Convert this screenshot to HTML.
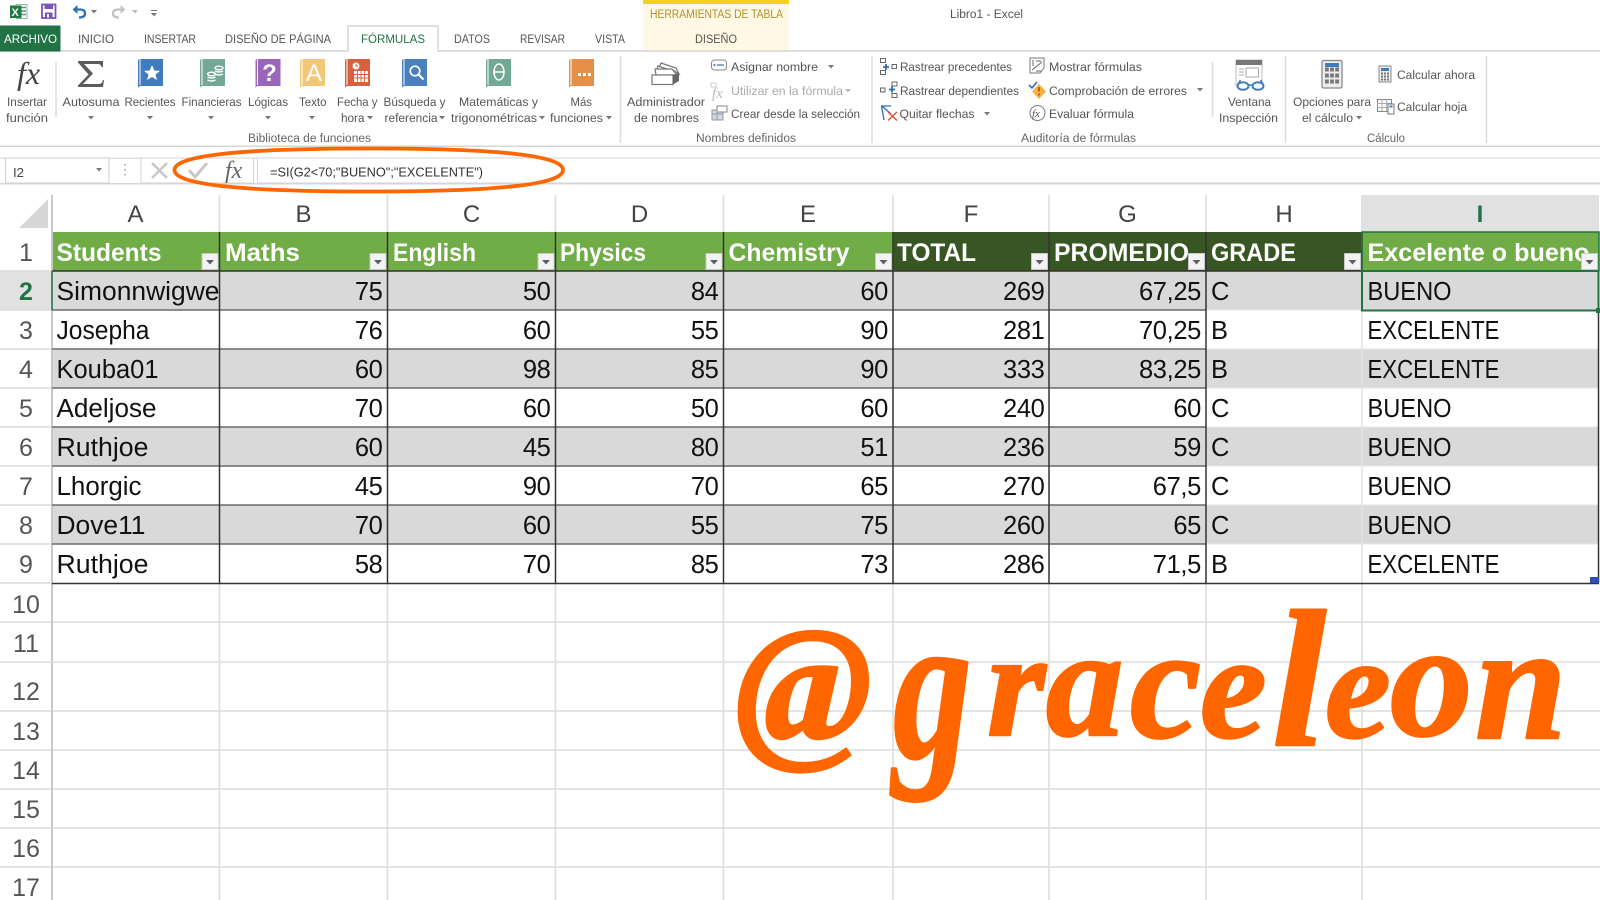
<!DOCTYPE html>
<html><head><meta charset="utf-8"><title>Libro1 - Excel</title>
<style>
html,body{margin:0;padding:0;background:#fff;width:1600px;height:900px;overflow:hidden}
svg{display:block;font-family:"Liberation Sans",sans-serif}
.r text{font-size:12.3px;fill:#555}
.d text{font-size:25.5px;fill:#111}
.n text{font-size:25.5px;fill:#111;text-anchor:end;letter-spacing:-.35px}
.h text{font-size:25px;fill:#fff;font-weight:bold}
.rh text{font-size:25px;fill:#555;text-anchor:middle}
.ch text{font-size:24px;fill:#444;text-anchor:middle}
</style></head><body>
<svg width="1600" height="900" viewBox="0 0 1600 900" xmlns="http://www.w3.org/2000/svg">
<defs>
<path id="ar" d="M0 0h6l-3 3.5z" fill="#777"/>
<g id="fb"><rect x=".5" y=".5" width="16" height="16" fill="#f3f3f5" stroke="#c8c8c8"/><path d="M4.5 7h8l-4 4.5z" fill="#606060"/></g>
<path id="bk" d="M2 0h23v27H3.5Q0 27 0 29.5V2Q0 0 2 0z"/>
</defs>
<rect width="1600" height="900" fill="#fff"/>

<!-- column header highlight -->
<rect x="1362" y="195" width="237" height="37" fill="#e1e1e1"/>
<rect x="0" y="271" width="52" height="39" fill="#e1e1e1"/>

<!-- data backgrounds -->
<rect x="52" y="232" width="1154" height="39" fill="#70ad47"/>
<rect x="893" y="232" width="469" height="39" fill="#375623"/>
<rect x="1362" y="232" width="237" height="39" fill="#70ad47"/>
<g fill="#d9d9d9">
<rect x="52" y="271" width="1547" height="39"/>
<rect x="52" y="349" width="1547" height="39"/>
<rect x="52" y="427" width="1547" height="39"/>
<rect x="52" y="505" width="1547" height="39"/>
</g>

<!-- gridlines -->
<g stroke="#dcdcdc" stroke-width="1.5" fill="none">
<path d="M0 271H52M0 310H52M0 349H52M0 388H52M0 427H52M0 466H52M0 505H52M0 544H52M0 583H52"/>
<path d="M52 622H1600M52 662H1600M52 711H1600M52 750H1600M52 789H1600M52 828H1600M52 867H1600M0 622H52M0 662H52M0 711H52M0 750H52M0 789H52M0 828H52M0 867H52"/>
<path d="M219.5 195V232M387.5 195V232M555.5 195V232M723.5 195V232M893 195V232M1049 195V232M1206 195V232M1362 195V232"/>
<path d="M219.5 583V900M387.5 583V900M555.5 583V900M723.5 583V900M893 583V900M1049 583V900M1206 583V900M1362 583V900"/>
</g>
<path d="M52 195V900" stroke="#c8c8c8" stroke-width="2"/>
<path d="M52 662H1600" stroke="#e6e6e6" stroke-width="2"/>
<path d="M1206 310H1599M1206 349H1599M1206 388H1599M1206 427H1599M1206 466H1599M1206 505H1599M1206 544H1599" stroke="#e6e6e6" stroke-width="1"/>
<path d="M1362 310V583" stroke="#e2e2e2" stroke-width="1.5"/>

<!-- table borders -->
<g stroke="#6a6a6a" stroke-width="1.5" fill="none">
<path d="M52 310H1206M52 349H1206M52 388H1206M52 427H1206M52 466H1206M52 505H1206M52 544H1206"/>
</g>
<g stroke="#333" stroke-width="1.5" fill="none">
<path d="M52 271H1362M52 583.5H1599"/>
<path d="M219.5 232V583M387.5 232V583M555.5 232V583M723.5 232V583M893 232V583M1049 232V583M1206 232V583M1598.5 271V583"/>
<path d="M1362 232V271"/>
</g>
<path d="M52 271V310" stroke="#217346" stroke-width="1.5"/>
<rect x="1362" y="232" width="237" height="39" fill="none" stroke="#217346" stroke-width="1.5"/>
<rect x="1362" y="271" width="236.5" height="39.5" fill="none" stroke="#217346" stroke-width="2"/>
<rect x="1596" y="308" width="4" height="5" fill="#217346"/>
<rect x="1590" y="577" width="9" height="6" fill="#2f4fb0"/>

<!-- corner triangle -->
<path d="M48 199V228H19z" fill="#d6d6d6"/>

<!-- column letters -->
<g class="ch">
<text x="135.5" y="222">A</text><text x="303.5" y="222">B</text><text x="471.5" y="222">C</text><text x="639.5" y="222">D</text><text x="808" y="222">E</text><text x="971" y="222">F</text><text x="1127.5" y="222">G</text><text x="1284" y="222">H</text>
<text x="1480" y="222" style="fill:#217346;font-weight:bold">I</text>
</g>

<!-- row numbers -->
<g class="rh">
<text x="26" y="261">1</text><text x="26" y="300" style="fill:#217346;font-weight:bold">2</text><text x="26" y="339">3</text><text x="26" y="378">4</text><text x="26" y="417">5</text><text x="26" y="456">6</text><text x="26" y="495">7</text><text x="26" y="534">8</text><text x="26" y="573">9</text><text x="26" y="613">10</text><text x="26" y="652">11</text><text x="26" y="700">12</text><text x="26" y="740">13</text><text x="26" y="779">14</text><text x="26" y="818">15</text><text x="26" y="857">16</text><text x="26" y="896">17</text>
</g>

<!-- header labels -->
<g class="h">
<text x="56.5" y="261" textLength="105" lengthAdjust="spacingAndGlyphs">Students</text>
<text x="225" y="261" textLength="75" lengthAdjust="spacingAndGlyphs">Maths</text>
<text x="393" y="261" textLength="83" lengthAdjust="spacingAndGlyphs">English</text>
<text x="560" y="261" textLength="86" lengthAdjust="spacingAndGlyphs">Physics</text>
<text x="728.5" y="261" textLength="121" lengthAdjust="spacingAndGlyphs">Chemistry</text>
<text x="897" y="261" textLength="79" lengthAdjust="spacingAndGlyphs">TOTAL</text>
<text x="1054" y="261" textLength="135" lengthAdjust="spacingAndGlyphs">PROMEDIO</text>
<text x="1211" y="261" textLength="85" lengthAdjust="spacingAndGlyphs">GRADE</text>
<text x="1367.5" y="261" textLength="222" lengthAdjust="spacingAndGlyphs">Excelente o bueno</text>
</g>
<use href="#fb" x="201.5" y="253"/><use href="#fb" x="369.5" y="253"/><use href="#fb" x="537.5" y="253"/><use href="#fb" x="705.5" y="253"/><use href="#fb" x="875" y="253"/><use href="#fb" x="1031" y="253"/><use href="#fb" x="1188" y="253"/><use href="#fb" x="1344" y="253"/><use href="#fb" x="1581" y="253"/>

<!-- names -->
<g class="d">
<text x="56.5" y="300" textLength="163" lengthAdjust="spacingAndGlyphs">Simonnwigwe</text>
<text x="56.5" y="339" textLength="93" lengthAdjust="spacingAndGlyphs">Josepha</text>
<text x="56.5" y="378" textLength="102" lengthAdjust="spacingAndGlyphs">Kouba01</text>
<text x="56.5" y="417" textLength="100" lengthAdjust="spacingAndGlyphs">Adeljose</text>
<text x="56.5" y="456" textLength="92" lengthAdjust="spacingAndGlyphs">Ruthjoe</text>
<text x="56.5" y="495" textLength="85" lengthAdjust="spacingAndGlyphs">Lhorgic</text>
<text x="56.5" y="534" textLength="89" lengthAdjust="spacingAndGlyphs">Dove11</text>
<text x="56.5" y="573" textLength="92" lengthAdjust="spacingAndGlyphs">Ruthjoe</text>
<text x="1211" y="300">C</text><text x="1211" y="339">B</text><text x="1211" y="378">B</text><text x="1211" y="417">C</text><text x="1211" y="456">C</text><text x="1211" y="495">C</text><text x="1211" y="534">C</text><text x="1211" y="573">B</text>
<text x="1367.5" y="300" textLength="84" lengthAdjust="spacingAndGlyphs">BUENO</text>
<text x="1367.5" y="339" textLength="132" lengthAdjust="spacingAndGlyphs">EXCELENTE</text>
<text x="1367.5" y="378" textLength="132" lengthAdjust="spacingAndGlyphs">EXCELENTE</text>
<text x="1367.5" y="417" textLength="84" lengthAdjust="spacingAndGlyphs">BUENO</text>
<text x="1367.5" y="456" textLength="84" lengthAdjust="spacingAndGlyphs">BUENO</text>
<text x="1367.5" y="495" textLength="84" lengthAdjust="spacingAndGlyphs">BUENO</text>
<text x="1367.5" y="534" textLength="84" lengthAdjust="spacingAndGlyphs">BUENO</text>
<text x="1367.5" y="573" textLength="132" lengthAdjust="spacingAndGlyphs">EXCELENTE</text>
</g>

<!-- numbers -->
<g class="n">
<text x="382.5" y="300">75</text><text x="550.5" y="300">50</text><text x="718.5" y="300">84</text><text x="888" y="300">60</text><text x="1044.5" y="300">269</text><text x="1201" y="300">67,25</text>
<text x="382.5" y="339">76</text><text x="550.5" y="339">60</text><text x="718.5" y="339">55</text><text x="888" y="339">90</text><text x="1044.5" y="339">281</text><text x="1201" y="339">70,25</text>
<text x="382.5" y="378">60</text><text x="550.5" y="378">98</text><text x="718.5" y="378">85</text><text x="888" y="378">90</text><text x="1044.5" y="378">333</text><text x="1201" y="378">83,25</text>
<text x="382.5" y="417">70</text><text x="550.5" y="417">60</text><text x="718.5" y="417">50</text><text x="888" y="417">60</text><text x="1044.5" y="417">240</text><text x="1201" y="417">60</text>
<text x="382.5" y="456">60</text><text x="550.5" y="456">45</text><text x="718.5" y="456">80</text><text x="888" y="456">51</text><text x="1044.5" y="456">236</text><text x="1201" y="456">59</text>
<text x="382.5" y="495">45</text><text x="550.5" y="495">90</text><text x="718.5" y="495">70</text><text x="888" y="495">65</text><text x="1044.5" y="495">270</text><text x="1201" y="495">67,5</text>
<text x="382.5" y="534">70</text><text x="550.5" y="534">60</text><text x="718.5" y="534">55</text><text x="888" y="534">75</text><text x="1044.5" y="534">260</text><text x="1201" y="534">65</text>
<text x="382.5" y="573">58</text><text x="550.5" y="573">70</text><text x="718.5" y="573">85</text><text x="888" y="573">73</text><text x="1044.5" y="573">286</text><text x="1201" y="573">71,5</text>
</g>

<!-- ===== RIBBON ===== -->
<g style="filter:blur(.35px)">
<rect x="643" y="0" width="146" height="50" fill="#fff8e4"/>
<rect x="643" y="0" width="146" height="4" fill="#f6d021"/>
<rect x="0" y="50" width="1600" height="2" fill="#dedede"/>
<rect x="0" y="145.5" width="1600" height="1.5" fill="#d6d6d6"/>
<rect x="0" y="157.5" width="1600" height="1.5" fill="#e0e0e0"/>
<rect x="0" y="183" width="1600" height="1.5" fill="#d6d6d6"/>
<path d="M348 51V26H438V51" fill="#fff" stroke="#d6d6d6" stroke-width="1.5"/>
<rect x="349" y="49" width="88.5" height="4" fill="#fff"/>
<rect x="0" y="25.5" width="60.5" height="26" fill="#217346"/>

<!-- quick access -->
<path d="M16 4.5h11v14H16z" fill="#fff" stroke="#8fb9a1"/>
<path d="M21 7.500h5M21 11h5M21 14.500h5" stroke="#4d9a6f" stroke-width="1.6"/>
<rect x="10" y="5.500" width="11.500" height="12.500" fill="#1f7a46"/>
<text x="11.500" y="16" style="font-size:11px;font-weight:bold;fill:#fff">X</text>
<rect x="42" y="4.500" width="13.500" height="13.500" fill="#fff" stroke="#7a52b8" stroke-width="1.8"/>
<path d="M44.500 4.500h8.500v4.500h-8.500zM45 12.500h7.500v5.500h-7.500z" fill="#7a52b8"/><rect x="47" y="14" width="2" height="3.500" fill="#fff"/>
<path d="M72.500 9.500L77.500 5V14z" fill="#2f6fb5"/>
<path d="M75 9.500H80Q85 9.500 85 13.500Q85 17.500 79 17.500" fill="none" stroke="#2f6fb5" stroke-width="2.300"/>
<use href="#ar" x="91" y="10"/>
<path d="M125.500 9.500L120.500 5V14z" fill="#c4c4c4"/>
<path d="M123 9.500H118Q113 9.500 113 13.500Q113 17.500 119 17.500" fill="none" stroke="#c4c4c4" stroke-width="2.300"/>
<use href="#ar" x="132" y="10" style="opacity:.5"/>
<path d="M151 10.500h6" stroke="#777"/><use href="#ar" x="151" y="13"/>

<!-- title/tab text -->
<g class="r">
<text x="650" y="18" textLength="133" lengthAdjust="spacingAndGlyphs" style="font-size:11.500px;fill:#b58e2c">HERRAMIENTAS DE TABLA</text>
<text x="950" y="18" textLength="73" lengthAdjust="spacingAndGlyphs">Libro1 - Excel</text>
<text x="4" y="43" textLength="53" lengthAdjust="spacingAndGlyphs" style="fill:#fff">ARCHIVO</text>
<text x="78" y="43" textLength="36" lengthAdjust="spacingAndGlyphs">INICIO</text>
<text x="144" y="43" textLength="52" lengthAdjust="spacingAndGlyphs">INSERTAR</text>
<text x="225" y="43" textLength="106" lengthAdjust="spacingAndGlyphs">DISEÑO DE PÁGINA</text>
<text x="361" y="43" textLength="64" lengthAdjust="spacingAndGlyphs" style="fill:#217346">FÓRMULAS</text>
<text x="454" y="43" textLength="36" lengthAdjust="spacingAndGlyphs">DATOS</text>
<text x="520" y="43" textLength="45" lengthAdjust="spacingAndGlyphs">REVISAR</text>
<text x="595" y="43" textLength="30" lengthAdjust="spacingAndGlyphs">VISTA</text>
<text x="695" y="43" textLength="42" lengthAdjust="spacingAndGlyphs">DISEÑO</text>

<!-- ribbon labels -->
<text x="7" y="106" textLength="40" lengthAdjust="spacingAndGlyphs">Insertar</text>
<text x="6" y="122" textLength="42" lengthAdjust="spacingAndGlyphs">función</text>
<text x="62.500" y="106" textLength="57" lengthAdjust="spacingAndGlyphs">Autosuma</text>
<text x="124.500" y="106" textLength="51" lengthAdjust="spacingAndGlyphs">Recientes</text>
<text x="181.500" y="106" textLength="60" lengthAdjust="spacingAndGlyphs">Financieras</text>
<text x="248" y="106" textLength="40" lengthAdjust="spacingAndGlyphs">Lógicas</text>
<text x="299" y="106" textLength="27.500" lengthAdjust="spacingAndGlyphs">Texto</text>
<text x="337" y="106" textLength="40.500" lengthAdjust="spacingAndGlyphs">Fecha y</text>
<text x="341" y="122" textLength="23.500" lengthAdjust="spacingAndGlyphs">hora</text>
<text x="383.500" y="106" textLength="62" lengthAdjust="spacingAndGlyphs">Búsqueda y</text>
<text x="384.500" y="122" textLength="53" lengthAdjust="spacingAndGlyphs">referencia</text>
<text x="459" y="106" textLength="79" lengthAdjust="spacingAndGlyphs">Matemáticas y</text>
<text x="451" y="122" textLength="86" lengthAdjust="spacingAndGlyphs">trigonométricas</text>
<text x="570.500" y="106" textLength="21.500" lengthAdjust="spacingAndGlyphs">Más</text>
<text x="550" y="122" textLength="53" lengthAdjust="spacingAndGlyphs">funciones</text>
<text x="248" y="142" textLength="123" lengthAdjust="spacingAndGlyphs" style="font-size:11.500px;fill:#666">Biblioteca de funciones</text>

<text x="627" y="106" textLength="78" lengthAdjust="spacingAndGlyphs">Administrador</text>
<text x="634" y="122" textLength="65" lengthAdjust="spacingAndGlyphs">de nombres</text>
<text x="731" y="71" textLength="87" lengthAdjust="spacingAndGlyphs">Asignar nombre</text>
<text x="731" y="95" textLength="112" lengthAdjust="spacingAndGlyphs" style="fill:#aaa">Utilizar en la fórmula</text>
<text x="731" y="118" textLength="129" lengthAdjust="spacingAndGlyphs">Crear desde la selección</text>
<text x="696" y="142" textLength="100" lengthAdjust="spacingAndGlyphs" style="font-size:11.500px;fill:#666">Nombres definidos</text>

<text x="900" y="71" textLength="112" lengthAdjust="spacingAndGlyphs">Rastrear precedentes</text>
<text x="900" y="95" textLength="119" lengthAdjust="spacingAndGlyphs">Rastrear dependientes</text>
<text x="899.500" y="118" textLength="75" lengthAdjust="spacingAndGlyphs">Quitar flechas</text>
<text x="1049" y="71" textLength="93" lengthAdjust="spacingAndGlyphs">Mostrar fórmulas</text>
<text x="1049" y="95" textLength="138" lengthAdjust="spacingAndGlyphs">Comprobación de errores</text>
<text x="1049" y="118" textLength="85" lengthAdjust="spacingAndGlyphs">Evaluar fórmula</text>
<text x="1021" y="142" textLength="115" lengthAdjust="spacingAndGlyphs" style="font-size:11.500px;fill:#666">Auditoría de fórmulas</text>

<text x="1228" y="106" textLength="43" lengthAdjust="spacingAndGlyphs">Ventana</text>
<text x="1219" y="122" textLength="59" lengthAdjust="spacingAndGlyphs">Inspección</text>
<text x="1293" y="106" textLength="78" lengthAdjust="spacingAndGlyphs">Opciones para</text>
<text x="1302" y="122" textLength="51" lengthAdjust="spacingAndGlyphs">el cálculo</text>
<text x="1397" y="79" textLength="78" lengthAdjust="spacingAndGlyphs">Calcular ahora</text>
<text x="1397" y="111" textLength="70" lengthAdjust="spacingAndGlyphs">Calcular hoja</text>
<text x="1367" y="142" textLength="38" lengthAdjust="spacingAndGlyphs" style="font-size:11.500px;fill:#666">Cálculo</text>
</g>

<!-- arrows -->
<use href="#ar" x="88" y="116"/><use href="#ar" x="147" y="116"/><use href="#ar" x="208" y="116"/><use href="#ar" x="265" y="116"/><use href="#ar" x="309" y="116"/><use href="#ar" x="367" y="116"/><use href="#ar" x="439" y="116"/><use href="#ar" x="539" y="116"/><use href="#ar" x="606" y="116"/>
<use href="#ar" x="828" y="65"/><use href="#ar" x="845" y="89" style="opacity:.5"/><use href="#ar" x="984" y="112"/><use href="#ar" x="1197" y="88"/><use href="#ar" x="1356" y="116"/>

<!-- separators -->
<g stroke="#dcdcdc" stroke-width="1.5">
<path d="M56 62V117M620.500 56V143M872 56V143M1212.500 62V117M1285.500 56V143M1486.500 56V143"/>
</g>

<!-- big icons -->
<text x="17" y="84" style="font-family:'Liberation Serif',serif;font-style:italic;font-size:32px;fill:#444">fx</text>
<path d="M78 61H103V67H101.500Q101 64 98 64H84L93 73.500L83 84H99Q102 84 103 80H104L103 87H78V85.500L88.500 74.500L78 62.500Z" fill="#5c5c5c"/>

<use href="#bk" x="138" y="59" fill="#3f7cbd"/><path d="M140 59v26" stroke="#fff"/><path d="M152 65l2.300 5.500 5.700.4-4.500 3.700 1.500 5.400-5-3-5 3 1.500-5.400-4.500-3.700 5.700-.4z" fill="#fff"/>
<use href="#bk" x="200" y="59" fill="#73a994"/><path d="M202 59v26" stroke="#fff"/><g fill="none" stroke="#fff" stroke-width="1.400"><ellipse cx="219" cy="68" rx="4" ry="1.800"/><path d="M215 71q4 2 8 0M215 74q4 2 8 0"/><ellipse cx="211.500" cy="74" rx="4" ry="1.800"/><path d="M207.500 77q4 2 8 0M207.500 80q4 2 8 0"/></g>
<use href="#bk" x="255.500" y="59" fill="#9a66ba"/><path d="M257.500 59v26" stroke="#fff"/><text x="269.500" y="81" text-anchor="middle" style="font-size:24px;font-weight:bold;fill:#fff">?</text>
<use href="#bk" x="300" y="59" fill="#f2c877"/><path d="M302 59v26" stroke="#fff"/><text x="314" y="81" text-anchor="middle" style="font-size:24px;fill:#fff">A</text>
<use href="#bk" x="345" y="59" fill="#d8603f"/><path d="M347 59v26" stroke="#fff"/><circle cx="356" cy="66" r="3.500" fill="#fff"/><path d="M356 64v2h2" stroke="#d8603f" fill="none"/><path d="M354 71h14v11h-14z" fill="#fff"/><path d="M354 74.500h14M354 78h14M357.500 71v11M361 71v11M364.500 71v11" stroke="#d8603f" stroke-width=".9"/>
<use href="#bk" x="402" y="59" fill="#4a80bd"/><path d="M404 59v26" stroke="#fff"/><circle cx="415" cy="71" r="4.800" fill="none" stroke="#fff" stroke-width="1.700"/><path d="M418.500 74.500l5 5" stroke="#fff" stroke-width="2"/>
<use href="#bk" x="486" y="59" fill="#73a994"/><path d="M488 59v26" stroke="#fff"/><ellipse cx="499" cy="72" rx="5" ry="8" fill="none" stroke="#fff" stroke-width="1.500"/><path d="M494 72h10" stroke="#fff" stroke-width="1.500"/>
<use href="#bk" x="569" y="59" fill="#e68f48"/><path d="M571 59v26" stroke="#fff"/><path d="M578 73h3v3h-3zM583 73h3v3h-3zM588 73h3v3h-3z" fill="#fff"/>

<!-- Admin names -->
<g fill="#fff" stroke="#777" stroke-width="1.200"><path d="M661 63l15 5 3 6-6-4-14-2z"/><path d="M658 66l15 5 3 6-6-4-14-2z"/><path d="M655 69h17l5 6H656z"/><rect x="652" y="75" width="21" height="9.500"/></g><path d="M673 75l6-2v8l-6 3.500z" fill="#666"/>

<!-- small icons -->
<rect x="711.500" y="60" width="15" height="10" rx="3" fill="#fff" stroke="#888"/><path d="M717 65h7" stroke="#3f7cbd" stroke-width="1.300"/><circle cx="714.500" cy="65" r="1.200" fill="#888"/>
<text x="712" y="98" style="font-family:'Liberation Serif',serif;font-style:italic;font-size:15px;fill:#bbb">fx</text><rect x="711" y="83" width="5" height="4" fill="none" stroke="#ccc"/>
<path d="M712 110h11v10h-11z" fill="#cfd8e6" stroke="#999"/><path d="M717 106h10v6h-10z" fill="#fff" stroke="#888"/><path d="M712 114h11M717 110v10" stroke="#999"/>

<g fill="#fff" stroke="#666" stroke-width="1"><rect x="880.500" y="58.500" width="5" height="4"/><rect x="880.500" y="70.500" width="5" height="4"/><rect x="892" y="64.500" width="4.500" height="4"/><rect x="892" y="82" width="5" height="4"/><rect x="892" y="93.500" width="5" height="4"/><rect x="880.500" y="88" width="4.500" height="4"/></g>
<path d="M883 67h6M886 64v6" stroke="#2f6fb5" stroke-width="1.800"/>
<path d="M889 89.500h6M892 86.500v6" stroke="#2f6fb5" stroke-width="1.800"/>
<path d="M881.500 106l2.500 14M882 106l9 8M881 106h10" stroke="#2f6fb5" stroke-width="1.300" fill="none"/><path d="M888 112l9 8.500M897 112l-9 8.500" stroke="#e0533d" stroke-width="1.500"/>

<path d="M1030 58h14v10l-4 5h-10z" fill="#fff" stroke="#777"/><path d="M1033 60v6M1036 61h5M1032 70l10-8M1036 71h5" stroke="#666"/>
<path d="M1029 85l3 3 5-6" stroke="#2f6fb5" stroke-width="1.600" fill="none"/><path d="M1039 84l7 7.500-7 7.500-7-7.500z" fill="#f2b23e"/><path d="M1039 87v4.500M1039 93.500v2" stroke="#c4401f" stroke-width="1.600"/>
<circle cx="1037.500" cy="113" r="7.500" fill="#fff" stroke="#777"/><text x="1032" y="117" style="font-family:'Liberation Serif',serif;font-style:italic;font-size:11px;fill:#555">fx</text>

<!-- Ventana -->
<rect x="1236" y="60" width="26" height="25" fill="#fff" stroke="#bbb"/><rect x="1236" y="60" width="26" height="5" fill="#777"/><rect x="1246" y="68" width="12.500" height="9" fill="#fff" stroke="#aaa"/><path d="M1239 69h5M1239 72h5M1239 75h5" stroke="#aaa"/>
<g fill="#fff" stroke="#3f7cbd" stroke-width="2"><ellipse cx="1243" cy="86" rx="5.500" ry="3.800"/><ellipse cx="1258" cy="86" rx="5.500" ry="3.800"/></g><path d="M1248.500 85h4M1237.500 85l3-5M1263.500 85l-3-5" stroke="#3f7cbd" stroke-width="1.600"/>

<!-- Calc big -->
<rect x="1322" y="60.500" width="20" height="27.500" rx="1.500" fill="#ededed" stroke="#888" stroke-width="1.300"/><rect x="1325" y="63" width="14" height="4" fill="#3f7cbd"/><path d="M1325 69.500h14M1325 75.500h14M1325 81.500h14" stroke="#777" stroke-width="4" stroke-dasharray="3.800 1.300"/>
<rect x="1379" y="66" width="12" height="16" fill="#ededed" stroke="#888"/><rect x="1381" y="68" width="8" height="3" fill="#3f7cbd"/><path d="M1381 73.500h8M1381 76.500h8M1381 79.500h8" stroke="#777" stroke-width="2" stroke-dasharray="2 1"/>
<rect x="1377.500" y="99.500" width="14" height="12" fill="#fff" stroke="#888"/><path d="M1377 103.500h14M1377 107.500h14M1382 99v12M1386.500 99v12" stroke="#aaa"/><rect x="1388" y="104" width="6" height="10" fill="#fff" stroke="#777"/><rect x="1389.500" y="105.500" width="3" height="2" fill="#3f7cbd"/>

<!-- formula bar -->
<rect x="5.500" y="158" width="103.500" height="25" fill="#fff" stroke="#cfcfcf"/>
<text x="13" y="177" textLength="11" lengthAdjust="spacingAndGlyphs" style="font-size:12.500px;fill:#444">I2</text>
<use href="#ar" x="96" y="168"/>
<path d="M125 164v1.500M125 169v1.500M125 174v1.500" stroke="#999" stroke-width="1.500"/>
<rect x="141" y="158" width="112.500" height="25" fill="#fff" stroke="#d4d4d4"/>
<rect x="257.500" y="158" width="1343" height="25" fill="#fff" stroke="#d4d4d4"/>
<path d="M152 163l15 15M167 163l-15 15" stroke="#c8c8c8" stroke-width="2.400"/>
<path d="M189 170l6 7 12-14" stroke="#c8c8c8" stroke-width="3" fill="none"/>
<text x="225" y="178" style="font-family:'Liberation Serif',serif;font-style:italic;font-size:24px;fill:#666">fx</text>
<text x="270" y="176.500" textLength="213" lengthAdjust="spacingAndGlyphs" style="font-size:13px;fill:#333">=SI(G2&lt;70;"BUENO";"EXCELENTE")</text>
</g>

<!-- orange ellipse -->
<path d="M174.500 170C174.500 156 235 148.500 369 148.500S563 156 563 170S503 191.500 369 191.500S174.500 184 174.500 170Z" fill="none" stroke="#ff6600" stroke-width="3.800"/>

<!-- handwriting-style handle -->
<g fill="#ff6600" stroke="#ff6600" stroke-linejoin="round" stroke-width="2.500" style="font-family:'Liberation Serif',serif;font-style:italic;font-weight:bold">
<text x="735" y="741" font-size="165">@</text>
<text transform="translate(893 757) scale(.75 1)" font-size="210">g</text>
<text><tspan x="987" y="735" font-size="150">r</tspan><tspan x="1046" y="735" font-size="155">a</tspan><tspan x="1130" y="737" font-size="160">c</tspan><tspan x="1200" y="737" font-size="150">e</tspan><tspan x="1272" y="745" font-size="195">l</tspan><tspan x="1325" y="737" font-size="148">e</tspan><tspan x="1390" y="735" font-size="165">o</tspan><tspan x="1475" y="738" font-size="165">n</tspan></text>
</g>
</svg>
</body></html>
